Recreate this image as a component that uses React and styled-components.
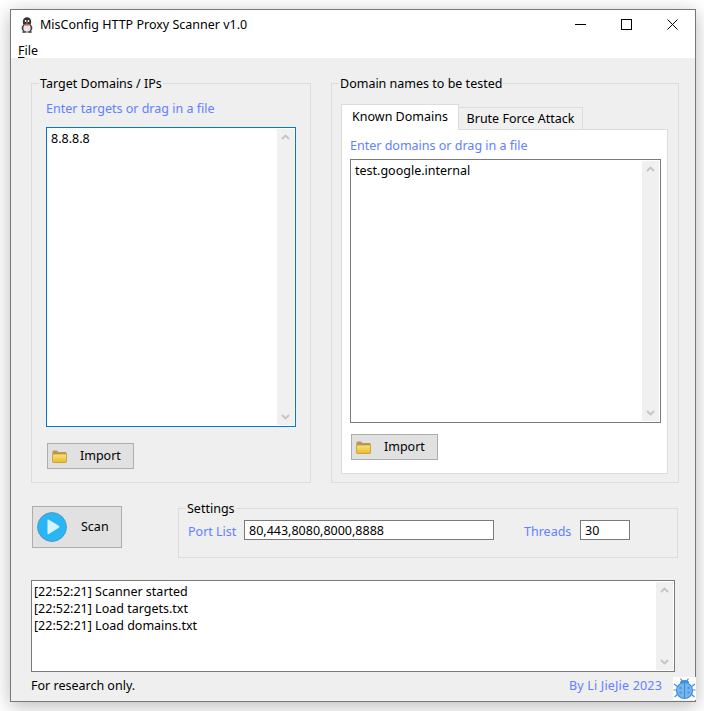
import React from "react"
import styled, { createGlobalStyle } from "styled-components"

const GlobalStyle = createGlobalStyle`
	html, body {
		margin: 0;
		padding: 0;
		background: #fff;
	}
	body {
		font-family: "Noto Sans", "Open Sans", sans-serif;
		font-size: 12.5px;
		color: #000;
	}
`

const Page = styled.div`
	width: 704px;
	height: 711px;
	padding: 9px 0 0 10px;
	box-sizing: border-box;
	overflow: hidden;
`

const Window = styled.div`
	width: 686px;
	height: 693px;
	box-sizing: border-box;
	border: 1px solid #777;
	background: #efefef;
	display: flex;
	flex-direction: column;
	box-shadow: 0 4px 18px rgba(0, 0, 0, 0.28);
`

const TitleBar = styled.div`
	height: 29px;
	background: #fff;
	display: flex;
	align-items: center;
	padding-left: 9px;
	flex: none;
`

const Title = styled.span`
	margin-left: 6px;
	flex: 1;
`

const WinButton = styled.div`
	width: 46px;
	height: 29px;
	display: flex;
	align-items: center;
	justify-content: center;
`

const MenuBar = styled.div`
	height: 19px;
	background: #fff;
	padding-left: 7px;
	line-height: 23px;
	flex: none;

	u {
		text-underline-offset: 2px;
	}
`

const Content = styled.div`
	flex: 1;
	display: flex;
	flex-direction: column;
	padding: 15px 0 0 20px;
`

const TopRow = styled.div`
	display: flex;
	gap: 20px;
`

const Group = styled.fieldset`
	margin: ${p => p.$top || 0}px 0 0 ${p => p.$left || 0}px;
	width: ${p => p.$width}px;
	height: ${p => p.$height}px;
	box-sizing: border-box;
	border: 1px solid #dcdcdc;
	padding: ${p => p.$padding};
	min-width: 0;
`

const Legend = styled.legend`
	padding: 2px 1px 0;
	margin-left: ${p => p.$offset}px;
	line-height: 18px;
`

const Hint = styled.div`
	color: #6280ff;
	line-height: 18px;
	margin: ${p => p.$margin};
`

const TextArea = styled.div`
	width: ${p => p.$width}px;
	height: ${p => p.$height}px;
	box-sizing: border-box;
	border: 1px solid ${p => p.$focus ? "#0078d7" : "#7a7a7a"};
	background: #fff;
	display: flex;
	justify-content: space-between;
	padding: 1px;
`

const AreaText = styled.div`
	padding: 1px 3px 0;
	line-height: 17px;
	white-space: pre;
`

const ScrollTrack = styled.div`
	width: 17px;
	background: #f0f0f0;
	display: flex;
	flex-direction: column;
	justify-content: space-between;
	align-items: center;
	padding: 5px 0;
	flex: none;
`

const ImportButton = styled.div`
	width: 87px;
	height: 26px;
	box-sizing: border-box;
	border: 1px solid #adadad;
	background: #e1e1e1;
	display: flex;
	align-items: center;
	padding-left: 4px;
	margin: ${p => p.$margin};
`

const ImportLabel = styled.span`
	margin: 0 0 2px 13px;
`

const Tabs = styled.div`
	display: flex;
	align-items: flex-end;
	height: 26px;
	margin-top: 11px;
`

const Tab = styled.div`
	box-sizing: border-box;
	border: 1px solid #dcdcdc;
	text-align: center;
	line-height: ${p => p.$active ? 23 : 22}px;
	background: ${p => p.$active ? "#fff" : "#f0f0f0"};
	border-bottom: ${p => p.$active ? "none" : "1px solid #dcdcdc"};
	width: ${p => p.$width}px;
	height: ${p => p.$active ? 26 : 23}px;
	border-left: ${p => p.$active ? "1px solid #dcdcdc" : "none"};
	position: relative;
	z-index: ${p => p.$active ? 1 : 0};
`

const TabPane = styled.div`
	width: 327px;
	height: 345px;
	box-sizing: border-box;
	border: 1px solid #dcdcdc;
	background: #fff;
	margin-top: -1px;
	padding: 7px 0 0 8px;
`

const BottomRow = styled.div`
	display: flex;
	align-items: flex-start;
	margin-top: 16px;
`

const ScanButton = styled.div`
	width: 90px;
	height: 42px;
	box-sizing: border-box;
	border: 1px solid #adadad;
	background: #e1e1e1;
	display: flex;
	align-items: center;
	margin: 7px 0 0 1px;
	padding-left: 4px;
`

const ScanLabel = styled.span`
	margin: 0 0 2px 14px;
`

const SettingsRow = styled.div`
	display: flex;
	align-items: center;
	margin-top: 2px;
`

const FieldLabel = styled.span`
	color: #6280ff;
	margin: 2px 0 0 ${p => p.$left}px;
	width: 56px;
`

const Input = styled.div`
	width: ${p => p.$width}px;
	height: 20px;
	box-sizing: border-box;
	border: 1px solid #7a7a7a;
	background: #fff;
	line-height: 19px;
	padding-left: 4px;
`

const LogBox = styled.div`
	width: 644px;
	height: 92px;
	box-sizing: border-box;
	border: 1px solid #7a7a7a;
	background: #fff;
	display: flex;
	justify-content: space-between;
	padding: 1px;
	margin-top: 22px;
`

const LogLines = styled.div`
	padding: 1px 1px 0;
	line-height: 17px;
`

const Footer = styled.div`
	display: flex;
	align-items: flex-start;
	width: 665px;
	height: 23px;
	margin-top: 5px;
`

const FooterNote = styled.span`
	flex: 1;
	line-height: 18px;
`

const Credit = styled.span`
	color: #6280ff;
	line-height: 18px;
	letter-spacing: 0.18px;
	margin-right: 11px;
`

const Chevron = ({ up }) => (
	<svg width="9" height="6" viewBox="0 0 9 6" fill="none" stroke="#c4c4c4" strokeWidth="1.8">
		<path d={up ? "M1 5l3.5-3.5L8 5" : "M1 1l3.5 3.5L8 1"} />
	</svg>
)

const Scrollbar = () => (
	<ScrollTrack>
		<Chevron up />
		<Chevron />
	</ScrollTrack>
)

const Penguin = () => (
	<svg width="14" height="16" viewBox="0 0 14 16">
		<ellipse cx="7" cy="5" rx="4.2" ry="4.8" fill="#333" />
		<ellipse cx="7" cy="11" rx="5.4" ry="4.6" fill="#444" />
		<ellipse cx="7" cy="11" rx="3.6" ry="3.8" fill="#e8e8e8" />
		<circle cx="5.6" cy="4" r="0.9" fill="#fff" />
		<circle cx="8.4" cy="4" r="0.9" fill="#fff" />
		<path d="M3.5 7.2h7l-1.5 1.4h-4z" fill="#d8404a" />
		<path d="M5.8 5.4h2.4L7 6.7z" fill="#e0a030" />
		<ellipse cx="4" cy="15" rx="2" ry="0.9" fill="#555" />
		<ellipse cx="10" cy="15" rx="2" ry="0.9" fill="#555" />
	</svg>
)

const Folder = () => (
	<svg width="15" height="13" viewBox="0 0 15 13">
		<defs>
			<linearGradient id="folderFill" x1="0" y1="0" x2="0" y2="1">
				<stop offset="0" stopColor="#fbe17a" />
				<stop offset="1" stopColor="#ecb92c" />
			</linearGradient>
		</defs>
		<path d="M0.5 1.5q0-1 1-1h3.5l1.5 1.5h7q1 0 1 1v1H0.5z" fill="#b8975a" />
		<path d="M0.5 4h14v7.5q0 1-1 1h-12q-1 0-1-1z" fill="url(#folderFill)" stroke="#b8912c" strokeWidth="0.7" />
	</svg>
)

const PlayIcon = () => (
	<svg width="30" height="30" viewBox="0 0 30 30">
		<circle cx="15" cy="15" r="14.5" fill="#29b6f6" stroke="#5a8fae" strokeWidth="0.8" />
		<path d="M10.5 8.5q0-1.4 1.3-.7l10 6q1.2.9 0 1.9l-10 6.4q-1.3.7-1.3-.8z" fill="#d8f3fe" />
	</svg>
)

const BugIcon = () => (
	<svg width="23" height="23" viewBox="0 0 23 23" fill="none">
		<rect width="23" height="23" fill="#fff" />
		<g stroke="#3f8fd8" strokeWidth="1.2">
			<path d="M7.5 1.5l2 3M15.5 1.5l-2 3" />
			<path d="M1 7l4 3M22 7l-4 3M0.5 13h3.5M22.5 13H19M1.5 20l3.5-3M21.5 20L18 17" />
		</g>
		<ellipse cx="11.5" cy="5.5" rx="4.5" ry="2.5" fill="#3f8fd8" />
		<circle cx="11.5" cy="13.5" r="8" fill="#78b4ee" stroke="#3f8fd8" strokeWidth="1.2" />
		<path d="M11.5 6v15" stroke="#3f8fd8" strokeWidth="1.1" />
		<g fill="#3f8fd8">
			<circle cx="7.5" cy="11" r="1.1" />
			<circle cx="15.5" cy="11" r="1.1" />
			<circle cx="7.5" cy="15.5" r="1.1" />
			<circle cx="15.5" cy="15.5" r="1.1" />
		</g>
	</svg>
)

export default function App() {
	return (
		<Page>
			<GlobalStyle />
			<Window>
				<TitleBar>
					<Penguin />
					<Title>MisConfig HTTP Proxy Scanner v1.0</Title>
					<WinButton>
						<svg width="11" height="11" viewBox="0 0 11 11"><path d="M0 5.5h11" stroke="#000" /></svg>
					</WinButton>
					<WinButton>
						<svg width="11" height="11" viewBox="0 0 11 11"><rect x="0.5" y="0.5" width="10" height="10" fill="none" stroke="#000" /></svg>
					</WinButton>
					<WinButton>
						<svg width="11" height="11" viewBox="0 0 11 11"><path d="M0.5 0.5l10 10M10.5 0.5l-10 10" stroke="#000" /></svg>
					</WinButton>
				</TitleBar>
				<MenuBar><u>F</u>ile</MenuBar>
				<Content>
					<TopRow>
						<Group $width={280} $height={410} $padding="0 0 0 14px">
							<Legend $offset={-7}>Target Domains / IPs</Legend>
							<Hint $margin="7px 0 9px">Enter targets or drag in a file</Hint>
							<TextArea $width={250} $height={300} $focus>
								<AreaText>8.8.8.8</AreaText>
								<Scrollbar />
							</TextArea>
							<ImportButton $margin="16px 0 0 1px">
								<Folder />
								<ImportLabel>Import</ImportLabel>
							</ImportButton>
						</Group>
						<Group $width={348} $height={410} $padding="0 0 0 9px">
							<Legend $offset={-2}>Domain names to be tested</Legend>
							<Tabs>
								<Tab $active $width={118}>Known Domains</Tab>
								<Tab $width={124}>Brute Force Attack</Tab>
							</Tabs>
							<TabPane>
								<Hint $margin="0 0 4px">Enter domains or drag in a file</Hint>
								<TextArea $width={311} $height={264}>
									<AreaText>test.google.internal</AreaText>
									<Scrollbar />
								</TextArea>
								<ImportButton $margin="11px 0 0 1px">
									<Folder />
									<ImportLabel>Import</ImportLabel>
								</ImportButton>
							</TabPane>
						</Group>
					</TopRow>
					<BottomRow>
						<ScanButton>
							<PlayIcon />
							<ScanLabel>Scan</ScanLabel>
						</ScanButton>
						<Group $width={500} $height={60} $padding="0" $left={56} $top={-1}>
							<Legend $offset={7}>Settings</Legend>
							<SettingsRow>
								<FieldLabel $left={9}>Port List</FieldLabel>
								<Input $width={250}>80,443,8080,8000,8888</Input>
								<FieldLabel $left={30}>Threads</FieldLabel>
								<Input $width={50}>30</Input>
							</SettingsRow>
						</Group>
					</BottomRow>
					<LogBox>
						<LogLines>
							[22:52:21] Scanner started<br />
							[22:52:21] Load targets.txt<br />
							[22:52:21] Load domains.txt
						</LogLines>
						<Scrollbar />
					</LogBox>
					<Footer>
						<FooterNote>For research only.</FooterNote>
						<Credit>By Li JieJie 2023</Credit>
						<BugIcon />
					</Footer>
				</Content>
			</Window>
		</Page>
	)
}
